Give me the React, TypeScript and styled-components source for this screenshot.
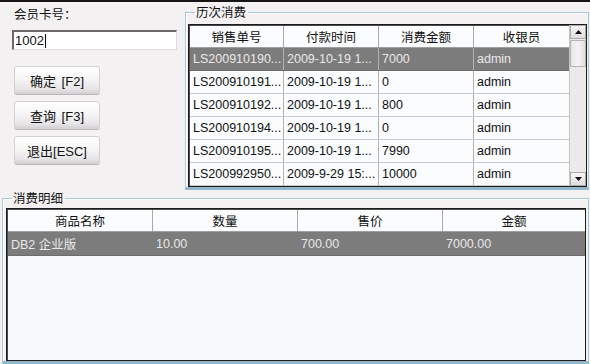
import React from "react";
import styled, { createGlobalStyle } from "styled-components";

const GlobalStyle = createGlobalStyle`
  html, body { margin: 0; padding: 0; background: #f3f1f2; }
  * { box-sizing: border-box; }
`;

const FONT = `"Liberation Sans", "Noto Sans CJK SC", sans-serif`;

const Window = styled.div`
  width: 590px;
  height: 364px;
  display: flex;
  flex-direction: column;
  background: #f4f1f3;
  border-top: 2px solid #161616;
  font-family: ${FONT};
  color: #111;
  overflow: hidden;
`;

const TopRow = styled.div`
  display: flex;
  height: 188px;
`;

const LeftPanel = styled.div`
  width: 185px;
  padding: 4px 0 0 12px;
  display: flex;
  flex-direction: column;
`;

const Label = styled.div`
  font-size: 12.5px;
  line-height: 16px;
  padding-left: 2px;
  font-family: "Noto Sans CJK SC", sans-serif;
`;

const InputBox = styled.div`
  margin-top: 8px;
  width: 165px;
  height: 20px;
  background: #fff;
  border-top: 2px solid #6a6a6a;
  border-left: 2px solid #6a6a6a;
  border-right: 1px solid #dcdcdc;
  border-bottom: 1px solid #dcdcdc;
  font-size: 13px;
  line-height: 17px;
  padding-left: 1px;
  display: flex;
  align-items: center;
`;

const Caret = styled.span`
  display: inline-block;
  width: 1px;
  height: 14px;
  background: #111;
  margin-left: 1px;
`;

const Buttons = styled.div`
  margin-top: 16px;
  margin-left: 2px;
  display: flex;
  flex-direction: column;
  gap: 7px;
`;

const Button = styled.button`
  width: 86px;
  height: 28px;
  padding: 0;
  font-family: ${FONT};
  font-size: 13px;
  color: #111;
  border: 1px solid #d2d0d1;
  border-radius: 3px;
  background: linear-gradient(#ffffff, #f7f6f7 45%, #e6e4e6 85%, #d4d2d4);
  box-shadow: 0 1px 0 #b9b7b9;
  word-spacing: 2px;
`;

const Group = styled.fieldset<{ $w?: string }>`
  margin: 0;
  min-width: 0;
  border: 1px solid #a6cadb;
  box-shadow: inset 1px 1px 0 #ffffff;
  border-bottom: 3px solid #93b6ca;
`;

const TopGroup = styled(Group)`
  flex: 1;
  margin: 2px 1px 0 0;
  padding: 4px 1px 2px 2px;
`;

const BottomGroup = styled(Group)`
  flex: 1;
  margin: 0 1px 0 2px;
  padding: 2px 2px 0 3px;
  display: flex;
  flex-direction: column;
`;

const Legend = styled.legend<{ $left: number }>`
  margin-left: ${(p) => p.$left}px;
  padding: 0 2px 0 1px;
  font-family: "Noto Sans CJK SC", sans-serif;
  font-size: 12.5px;
  line-height: 16px;
  color: #111;
`;

const GridFrame = styled.div`
  display: flex;
  border: 1px solid #1c1c1c;
  box-shadow: inset 1px 1px 0 #4a4a4a;
  background: #fafcfd;
`;

const TopFrame = styled(GridFrame)`
  height: 163px;
`;

const BottomFrame = styled(GridFrame)`
  flex: 1;
  flex-direction: column;
  background: #f7fafd;
  padding: 1px 0 0 1px;
`;

const Table = styled.div`
  flex: 1;
  display: flex;
  flex-direction: column;
  padding: 1px 0 0 1px;
`;

const Row = styled.div<{ $cols: string; $selected?: boolean; $h: number }>`
  display: grid;
  grid-template-columns: ${(p) => p.$cols};
  height: ${(p) => p.$h}px;
  background: ${(p) => (p.$selected ? "#7d7c7d" : "transparent")};
  color: ${(p) => (p.$selected ? "#e8e8e8" : "#111")};
  border-bottom: 1px solid ${(p) => (p.$selected ? "#6c6c6c" : "#c9c9c9")};
`;

const HeadRow = styled(Row)`
  background: #fbfcfd;
  border-bottom: 1px solid #9e9e9e;
`;

const HeadCell = styled.div<{ $last?: boolean }>`
  display: flex;
  align-items: center;
  justify-content: center;
  font-family: "Noto Sans CJK SC", sans-serif;
  font-size: 12.5px;
  border-right: ${(p) => (p.$last ? "none" : "1px solid #a9a9a9")};
`;

const Cell = styled.div<{ $last?: boolean }>`
  display: flex;
  align-items: center;
  padding-left: 3px;
  font-size: 12.5px;
  white-space: nowrap;
  overflow: hidden;
  border-right: ${(p) => (p.$last ? "none" : "1px solid #b3b3b3")};
`;

const ScrollBar = styled.div`
  width: 17px;
  display: flex;
  flex-direction: column;
  background: #ebeaeb;
  border-left: 1px solid #c4c4c4;
`;

const ScrollBtn = styled.div`
  height: 14px;
  display: flex;
  align-items: center;
  justify-content: center;
  background: linear-gradient(#f6f6f6, #dedede);
  border: 1px solid #a9a9a9;
`;

const Thumb = styled.div`
  height: 27px;
  margin-top: 1px;
  background: linear-gradient(90deg, #e6e6e6, #f4f4f4 50%, #e0e0e0);
  border: 1px solid #b4b4b4;
  border-radius: 1px;
`;

const Track = styled.div`
  flex: 1;
`;

const Arrow = ({ up }: { up?: boolean }) => (
  <svg width="7" height="4" viewBox="0 0 7 4">
    <polygon points={up ? "0,4 7,4 3.5,0" : "0,0 7,0 3.5,4"} fill="#111" />
  </svg>
);

const topCols = "94px 95px 95px 1fr";
const topHead = ["销售单号", "付款时间", "消费金额", "收银员"];
const history = [
  ["LS200910190...", "2009-10-19 1...", "7000", "admin"],
  ["LS200910191...", "2009-10-19 1...", "0", "admin"],
  ["LS200910192...", "2009-10-19 1...", "800", "admin"],
  ["LS200910194...", "2009-10-19 1...", "0", "admin"],
  ["LS200910195...", "2009-10-19 1...", "7990", "admin"],
  ["LS200992950...", "2009-9-29 15:...", "10000", "admin"],
];

const bottomCols = "145px 145px 145px 1fr";
const bottomHead = ["商品名称", "数量", "售价", "金额"];
const details = [["DB2 企业版", "10.00", "700.00", "7000.00"]];

export default function App() {
  return (
    <>
      <GlobalStyle />
      <Window>
        <TopRow>
          <LeftPanel>
            <Label>会员卡号：</Label>
            <InputBox>
              1002
              <Caret />
            </InputBox>
            <Buttons>
              <Button>确定 [F2]</Button>
              <Button>查询 [F3]</Button>
              <Button>退出[ESC]</Button>
            </Buttons>
          </LeftPanel>

          <TopGroup>
            <Legend $left={7}>历次消费</Legend>
            <TopFrame>
              <Table>
                <HeadRow $cols={topCols} $h={22}>
                  {topHead.map((h, i) => (
                    <HeadCell key={h} $last={i === topHead.length - 1}>
                      {h}
                    </HeadCell>
                  ))}
                </HeadRow>
                {history.map((r, i) => (
                  <Row key={i} $cols={topCols} $h={23} $selected={i === 0}>
                    {r.map((c, j) => (
                      <Cell key={j} $last={j === r.length - 1}>
                        {c}
                      </Cell>
                    ))}
                  </Row>
                ))}
              </Table>
              <ScrollBar>
                <ScrollBtn>
                  <Arrow up />
                </ScrollBtn>
                <Thumb />
                <Track />
                <ScrollBtn>
                  <Arrow />
                </ScrollBtn>
              </ScrollBar>
            </TopFrame>
          </TopGroup>
        </TopRow>

        <BottomGroup>
          <Legend $left={6}>消费明细</Legend>
          <BottomFrame>
            <HeadRow $cols={bottomCols} $h={22}>
              {bottomHead.map((h, i) => (
                <HeadCell key={h} $last={i === bottomHead.length - 1}>
                  {h}
                </HeadCell>
              ))}
            </HeadRow>
            {details.map((r, i) => (
              <Row key={i} $cols={bottomCols} $h={24} $selected>
                {r.map((c, j) => (
                  <Cell key={j} $last>
                    {c}
                  </Cell>
                ))}
              </Row>
            ))}
          </BottomFrame>
        </BottomGroup>
      </Window>
    </>
  );
}
